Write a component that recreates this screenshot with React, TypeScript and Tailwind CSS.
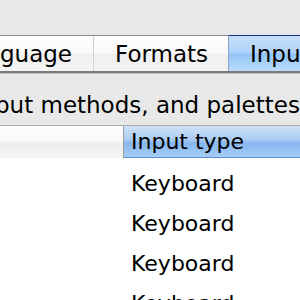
export default function App() {
  const rows = ['Keyboard', 'Keyboard', 'Keyboard', 'Keyboard']

  return (
    <div className="w-[300px] h-[300px] overflow-hidden bg-[#e8e8e8] font-['DejaVu_Sans',sans-serif] text-[22px] text-black">
      {/* Tabs */}
      <div className="mt-[35px] flex h-[38px] border-t border-b-2 border-t-[#8c8c8c] border-b-[#7a7a7a] text-[23px]">
        <div className="flex w-[93px] shrink-0 items-center justify-end pt-[2px] pr-[21px] bg-[linear-gradient(#fefefe_0%,#f9f9f9_48%,#efefef_52%,#f4f4f4_100%)]">
          <span className="whitespace-nowrap">Language</span>
        </div>
        <div className="w-px shrink-0 bg-[#d0d0d0]" />
        <div className="flex w-[134px] shrink-0 items-center pt-[2px] pl-[21px] bg-[linear-gradient(#fefefe_0%,#f9f9f9_48%,#efefef_52%,#f4f4f4_100%)]">
          <span>Formats</span>
        </div>
        <div className="w-px shrink-0 bg-[#8aa4c4]" />
        <div className="-mt-px flex flex-1 items-center border-t border-t-[#1d2a86] pt-[2px] pl-[21px] bg-[linear-gradient(#c6def9_0%,#aed2fa_48%,#93c4f8_52%,#b9dcfd_100%)]">
          <span className="whitespace-nowrap">Input Menu</span>
        </div>
      </div>
      <div className="h-px bg-[#c4c4c4]" />

      {/* Description */}
      <div className="h-[51px] pt-[16px] ml-[-26px] whitespace-nowrap text-[23px] leading-[30px]">
        input methods, and palettes to show in the menu
      </div>

      {/* Table */}
      <div className="bg-white">
        <div className="flex h-[33px] border-t border-[#a9a9a9]">
          <div className="w-[123px] shrink-0 bg-[linear-gradient(#ffffff_0%,#f8f8f8_50%,#eeeeee_51%,#f5f5f5_100%)]" />
          <div className="w-px shrink-0 bg-[#9c9c9c]" />
          <div className="flex flex-1 items-center pl-[7px] border-b border-[#5b8fd6] bg-[linear-gradient(#cfe2f9_0%,#a9cbf3_45%,#86b6ee_55%,#a6cdf6_100%)]">
            <span className="whitespace-nowrap">Input type</span>
          </div>
        </div>
        <div className="pt-[6px]">
          {rows.map((r, i) => (
            <div key={i} className="flex h-10 items-center leading-10">
              <div className="w-[131px] shrink-0" />
              <span>{r}</span>
            </div>
          ))}
        </div>
      </div>
    </div>
  )
}
